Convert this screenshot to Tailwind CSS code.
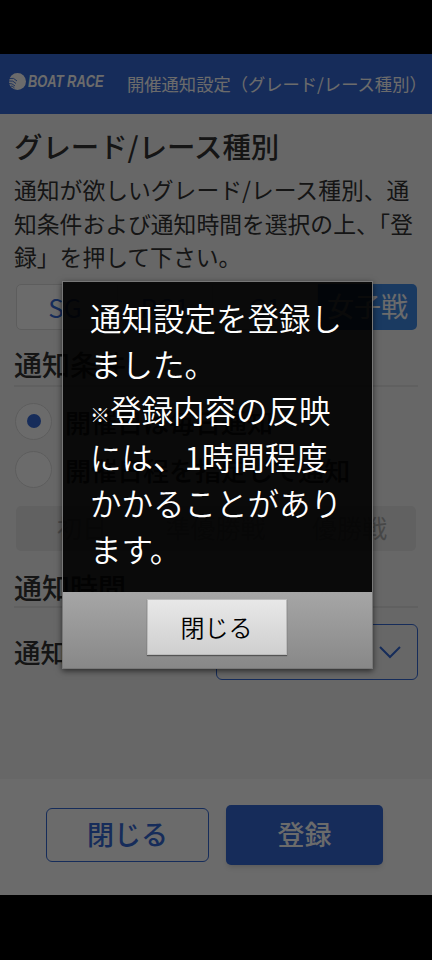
<!DOCTYPE html>
<html lang="ja">
  <head>
    <meta charset="UTF-8" />
    <meta name="viewport" content="width=device-width, initial-scale=1.0" />
    <script src="https://cdn.jsdelivr.net/npm/@tailwindcss/browser@4"></script>
    <title>開催通知設定</title>
  </head>
  <body class="bg-black font-['Noto_Sans_CJK_JP','Noto_Sans',sans-serif]">
    <div class="relative flex flex-col w-[432px] h-[960px] overflow-hidden bg-black">
      <div class="h-[54px] shrink-0 bg-black"></div>

      <!-- Header -->
      <div class="flex items-center h-[60px] shrink-0 bg-[#3569d6] text-white">
        <svg class="ml-[9px] -mt-[6px] w-[17px] h-[17px]" viewBox="0 0 17 17">
          <circle cx="8.5" cy="8.5" r="8.5" fill="#fff" />
          <path d="M0 5.5 Q5 4 8 8 M0 8 Q4 7 7 10.5 M0 10.5 Q3 10 6 13 M2 13 Q4 13 5.5 15" fill="none" stroke="#3569d6" stroke-width="0.9" />
        </svg>
        <span class="ml-[2px] -mt-[6px] w-[85px] text-[16.5px] leading-none font-bold italic scale-x-[0.78] origin-left font-['Liberation_Sans',sans-serif] whitespace-nowrap">BOAT RACE</span>
        <span class="ml-[14px] text-[17.3px] leading-none whitespace-nowrap">開催通知設定（グレード/レース種別）</span>
      </div>

      <!-- Content -->
      <div class="flex-1 flex flex-col px-[14px] bg-[#f6f6f6] text-[#333]">
        <h1 class="mt-[13px] text-[28.4px] leading-[38px] font-medium whitespace-nowrap">グレード/レース種別</h1>
        <p class="mt-[8px] text-[22.8px] leading-[33.5px] whitespace-nowrap">通知が欲しいグレード/レース種別、通<br />知条件および通知時間を選択の上、「登<br />録」を押して下さい。</p>

        <div class="flex mt-[10px] h-[46px] w-[401px] ml-[2px] text-[26px] text-[#3569d6]">
          <div class="flex items-center justify-center w-[102px] pr-[4px] bg-white border border-[#ddd] rounded-l-[5px]">SG</div>
          <div class="flex items-center justify-center w-[95px] bg-white border-y border-r border-[#ddd]">PG1</div>
          <div class="flex items-center justify-center w-[105px] bg-white border-y border-r border-[#ddd]">G1</div>
          <div class="flex items-center justify-center w-[99px] bg-[#3f8be8] text-white text-[27px] rounded-r-[5px]">女子戦</div>
        </div>

        <h2 class="mt-[17px] text-[28px] leading-[34px] font-medium">通知条件</h2>
        <div class="mt-[4px] border-b-2 border-[#e4e4e4]"></div>

        <div class="flex items-center mt-[16px] h-[37px]">
          <span class="flex items-center justify-center w-[37px] h-[37px] ml-px bg-white border border-[#ddd] rounded-full">
            <span class="w-[14px] h-[14px] bg-[#3569d6] rounded-full"></span>
          </span>
          <span class="ml-[13px] text-[26px] font-medium whitespace-nowrap">開催日は毎日通知</span>
        </div>
        <div class="flex items-center mt-[11px] h-[37px]">
          <span class="w-[37px] h-[37px] ml-px bg-white border border-[#ddd] rounded-full"></span>
          <span class="ml-[13px] text-[26px] font-medium whitespace-nowrap">開催日程を指定して通知</span>
        </div>

        <div class="flex mt-[18px] h-[45px] w-[400px] ml-[2px] bg-[#e6e6e6] rounded-[5px] text-[25px] text-[#aaa]">
          <div class="flex items-center justify-center w-[132px]">初日</div>
          <div class="flex items-center justify-center w-[135px]">準優勝戦</div>
          <div class="flex items-center justify-center w-[133px]">優勝戦</div>
        </div>

        <h2 class="mt-[19px] text-[28px] leading-[34px] font-medium">通知時間</h2>
        <div class="mt-[2px] border-b-2 border-[#e4e4e4]"></div>

        <div class="flex items-center justify-between mt-[16px] h-[56px]">
          <span class="text-[26.5px] font-medium">通知時刻</span>
          <div class="flex items-center justify-end w-[202px] h-[56px] border border-[#3569d6] rounded-[6px] pr-[16px]">
            <svg class="w-[22px] h-[14px]" viewBox="0 0 22 14" fill="none" stroke="#3569d6" stroke-width="2"><path d="M1 2 L11 12 L21 2" /></svg>
          </div>
        </div>
      </div>

      <!-- Footer -->
      <div class="flex items-center h-[116px] shrink-0 bg-white pl-[46px] pb-[5px] gap-[17px]">
        <button class="w-[163px] h-[54px] border border-[#3569d6] rounded-[6px] text-[27px] font-medium text-[#3569d6]">閉じる</button>
        <button class="w-[157px] h-[60px] bg-[#3569d6] rounded-[5px] shadow-md text-[27px] font-medium text-white">登録</button>
      </div>

      <div class="h-[65px] shrink-0 bg-black"></div>

      <!-- Dim layer and alert -->
      <div class="absolute inset-x-0 top-[54px] bottom-[65px] bg-black/[0.58]"></div>
      <div class="absolute left-[62px] top-[281px] w-[311px] h-[388px] flex flex-col border border-[#777] shadow-[0_2px_6px_rgba(0,0,0,0.6)]">
        <div class="h-[310px] bg-black/90 pl-[27px] pr-[20px] pt-[12px] text-[31.5px] leading-[46.2px] font-[350] text-white">通知設定を登録しました。<br /><span class="text-[20px] leading-none font-medium">※</span>登録内容の反映には、1時間程度かかることがあります。</div>
        <div class="flex-1 flex justify-center pt-[7px] pr-[2px] bg-gradient-to-b from-[#a6a6a6] to-[#888]">
          <button class="w-[140px] h-[56px] bg-gradient-to-b from-[#e8e8e8] to-[#cfcfcf] border border-[#bbb] shadow-[0_1px_1px_rgba(0,0,0,0.4)] text-[24px] font-[350] text-black">閉じる</button>
        </div>
      </div>
    </div>
  </body>
</html>
